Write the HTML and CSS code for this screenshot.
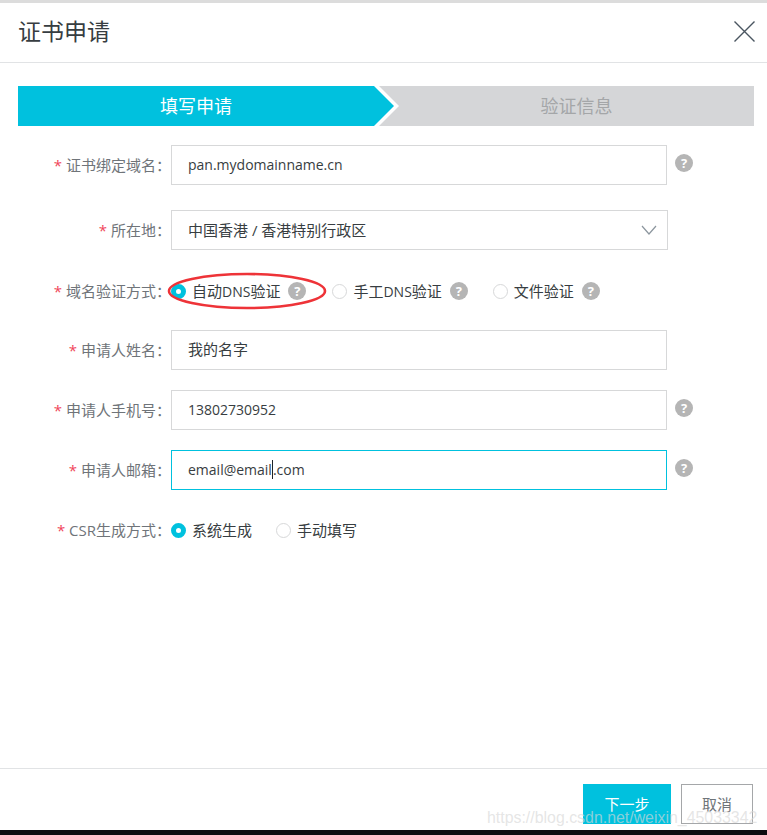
FILE: index.html
```html
<!DOCTYPE html>
<html lang="zh-CN">
<head>
  <meta charset="UTF-8">
  <meta name="viewport" content="width=device-width, initial-scale=1.0">
  <link rel="stylesheet" href="styles.css">
  <title>证书申请</title>
</head>
<body>
  <div class="dialogo">
    <div class="topo">
      <h1>证书申请</h1>
      <svg class="fechar" width="21" height="21" viewBox="0 0 21 21"><path d="M0.5 0.5L20.5 20.5M20.5 0.5L0.5 20.5" stroke="#4a5560" stroke-width="1.4" fill="none"/></svg>
    </div>

    <div class="passos">
      <div class="passo ativo">填写申请</div>
      <svg class="seta" width="25" height="40" viewBox="0 0 25 40">
        <polygon points="0,0 25,0 25,40 0,40" fill="#d5d6d8"/>
        <polygon points="0,0 5,0 25,20 5,40 0,40" fill="#fff"/>
        <polygon points="0,0 20,20 0,40" fill="#00c1de"/>
      </svg>
      <div class="passo">验证信息</div>
    </div>

    <div class="formulario">
      <div class="linha l1">
        <label><i>*</i> 证书绑定域名：</label>
        <div class="campo latino">pan.mydomainname.cn</div>
        <span class="ajuda">?</span>
      </div>
      <div class="linha l2">
        <label><i>*</i> 所在地：</label>
        <div class="campo selecao">中国香港 / 香港特别行政区
          <svg width="16" height="10" viewBox="0 0 16 10"><path d="M1 1L8 9L15 1" stroke="#8c969e" stroke-width="1.2" fill="none"/></svg>
        </div>
      </div>
      <div class="linha curta l3">
        <label><i>*</i> 域名验证方式：</label>
        <div class="opcoes">
          <span class="radio marcado"></span><span class="txt">自动<span class="latino">DNS</span>验证</span><span class="ajuda">?</span>
          <span class="radio r2"></span><span class="txt">手工<span class="latino">DNS</span>验证</span><span class="ajuda">?</span>
          <span class="radio r3"></span><span class="txt">文件验证</span><span class="ajuda">?</span>
        </div>
        <!-- marca vermelha da captura -->
        <svg class="elipse" width="162" height="42" viewBox="0 0 162 42"><ellipse cx="81" cy="21" rx="78" ry="17" stroke="#ee3338" stroke-width="2.6" fill="none"/></svg>
      </div>
      <div class="linha l4">
        <label><i>*</i> 申请人姓名：</label>
        <div class="campo nome">我的名字</div>
      </div>
      <div class="linha l5">
        <label><i>*</i> 申请人手机号：</label>
        <div class="campo latino">13802730952</div>
        <span class="ajuda">?</span>
      </div>
      <div class="linha l5">
        <label><i>*</i> 申请人邮箱：</label>
        <div class="campo latino foco">email@email<span class="cursor"></span>.com</div>
        <span class="ajuda">?</span>
      </div>
      <div class="linha curta l7">
        <label><i>*</i> CSR生成方式：</label>
        <div class="opcoes">
          <span class="radio marcado"></span><span class="txt">系统生成</span>
          <span class="radio r4"></span><span class="txt">手动填写</span>
        </div>
      </div>
    </div>

    <div class="rodape">
      <button class="botao primario">下一步</button>
      <button class="botao">取消</button>
    </div>
    <div class="marca">https://blog.csdn.net/weixin_45033342</div>
  </div>
  <div class="barra"></div>
</body>
</html>
```

FILE: styles.css
```css
*{
  margin: 0;
  padding: 0;
  box-sizing: border-box;
}
html, body{
  height: 835px;
  overflow: hidden;
}
body{
  background-color: #fff;
  font-family: "Open Sans", "Noto Sans CJK SC", sans-serif;
  font-size: 15px;
  color: #373d41;
}
.dialogo{
  position: relative;
  height: 830px;
  border-top: 3px solid #dcdcdc;
  display: flex;
  flex-direction: column;
}
.topo{
  height: 60px;
  border-bottom: 1px solid #e1e3e5;
  padding: 0 12px 2px 18px;
  display: flex;
  align-items: center;
  justify-content: space-between;
  flex-shrink: 0;
}
.topo h1{
  font-size: 23px;
  font-weight: 400;
  line-height: 30px;
  margin-top: -2px;
}
.passos{
  display: flex;
  margin: 23px 13px 0 18px;
  height: 40px;
  font-size: 18px;
  flex-shrink: 0;
}
.passo{
  flex: 1;
  background-color: #d5d6d8;
  color: #a4a6a8;
  text-align: center;
  line-height: 40px;
}
.passo.ativo{
  flex: 0 0 356px;
  background-color: #00c1de;
  color: #fff;
}
.seta{
  display: block;
  flex-shrink: 0;
}
.formulario{
  flex: 1;
}
.linha{
  display: flex;
  align-items: center;
  height: 40px;
  position: relative;
}
.l1{ margin-top: 19px; }
.l2{ margin-top: 25px; }
.l3{ margin-top: 21px; }
.l4{ margin-top: 19px; }
.l5{ margin-top: 20px; }
.l7{ margin-top: 20px; }
.linha label{
  width: 171px;
  flex-shrink: 0;
  text-align: right;
  color: #6f7479;
  white-space: nowrap;
  margin-top: -2px;
}
.linha label i{
  color: #f0455a;
  font-style: normal;
}
.campo{
  width: 496px;
  height: 40px;
  border: 1px solid #d7d8d9;
  padding: 0 16px;
  line-height: 38px;
  white-space: nowrap;
}
.nome{
  line-height: 36px;
}
.latino{
  font-size: 14px;
}
.selecao{
  width: 497px;
  display: flex;
  align-items: center;
  justify-content: space-between;
  padding-right: 10px;
}
.foco{
  border-color: #00c1de;
}
.cursor{
  display: inline-block;
  width: 0;
  height: 19px;
  border-left: 1px solid #1f2428;
  vertical-align: -4px;
}
.ajuda{
  display: inline-block;
  width: 18px;
  height: 18px;
  border-radius: 50%;
  background-color: #b5b5b5;
  color: #fff;
  font-size: 13px;
  font-weight: 700;
  line-height: 18px;
  text-align: center;
  flex-shrink: 0;
}
.campo + .ajuda{
  margin: -4px 0 0 8px;
}
.opcoes{
  display: flex;
  align-items: center;
}
.radio{
  width: 15px;
  height: 15px;
  border: 1px solid #d7d8d9;
  border-radius: 50%;
  flex-shrink: 0;
}
.radio.marcado{
  border: 5px solid #00c1de;
}
.txt{
  margin-left: 6px;
  margin-top: -2px;
}
.opcoes .ajuda{
  margin-left: 8px;
}
.r2{ margin-left: 26px; }
.r3{ margin-left: 25px; }
.r4{ margin-left: 24px; }
.elipse{
  position: absolute;
  left: 166px;
  top: -1px;
}
.rodape{
  height: 62px;
  border-top: 1px solid #e1e3e5;
  padding: 15px 14px 0 0;
  display: flex;
  justify-content: flex-end;
  align-items: flex-start;
  gap: 10px;
  flex-shrink: 0;
}
.botao{
  width: 72px;
  height: 40px;
  border: 1px solid #a5a7a9;
  background-color: #fff;
  color: #6f7479;
  font-family: inherit;
  font-size: 15px;
  padding-bottom: 2px;
}
.primario{
  width: 88px;
  border: none;
  background-color: #00c1de;
  color: #fff;
}
.marca{
  position: absolute;
  left: 487px;
  top: 806px;
  font-family: "Liberation Sans", sans-serif;
  font-size: 15.9px;
  color: rgba(215, 215, 215, 0.65);
  white-space: nowrap;
}
.barra{
  height: 5px;
  background-color: #0d0c10;
}
```
